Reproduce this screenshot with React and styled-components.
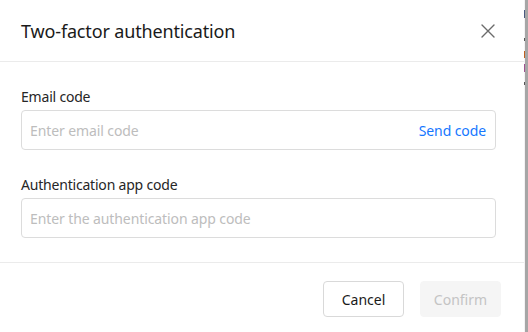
import React from "react";
import styled, { createGlobalStyle } from "styled-components";

const Global = createGlobalStyle`
  html, body { margin: 0; padding: 0; background: #ffffff; }
  body { font-family: "Noto Sans", "Liberation Sans", sans-serif; -webkit-font-smoothing: antialiased; }
  * { box-sizing: border-box; }
`;

const Screen = styled.div`
  display: flex;
  width: 528px;
  height: 332px;
  overflow: hidden;
`;

const Modal = styled.div`
  width: 524px;
  height: 332px;
  background: #ffffff;
  display: flex;
  flex-direction: column;
`;

const Backdrop = styled.div`
  flex: 1;
  display: flex;
`;

const Fragments = styled.div`
  width: 1px;
  display: flex;
  flex-direction: column;
  background: #f4f2f4;
`;

const Frag = styled.div`
  height: ${(p) => p.h}px;
  background: ${(p) => p.c};
`;

const Scrollbar = styled.div`
  flex: 1;
  background: #a6a6a6;
`;

const Header = styled.div`
  height: 62px;
  display: flex;
  align-items: center;
  justify-content: space-between;
  padding: 0 26px 0 21px;
  border-bottom: 1px solid #ebebeb;
`;

const Title = styled.h2`
  margin: 0;
  font-size: 18px;
  font-weight: 400;
  color: #1a1a1a;
  letter-spacing: -0.15px;
`;

const Close = styled.button`
  border: 0;
  background: transparent;
  padding: 0;
  width: 20px;
  height: 20px;
  display: flex;
  align-items: center;
  justify-content: center;
  cursor: pointer;
`;

const Body = styled.div`
  padding: 24px 28px 24px 21px;
  display: flex;
  flex-direction: column;
  gap: 24px;
  border-bottom: 1px solid #ebebeb;
`;

const Field = styled.div`
  display: flex;
  flex-direction: column;
  gap: 2px;
`;

const Label = styled.label`
  font-size: 14px;
  line-height: 22px;
  color: #262626;
  letter-spacing: -0.2px;
`;

const InputBox = styled.div`
  height: 40px;
  border: 1px solid #dcdcdc;
  border-radius: 4px;
  display: flex;
  align-items: center;
  padding: 0 9px 0 8px;
`;

const Input = styled.input`
  flex: 1;
  border: 0;
  outline: none;
  background: transparent;
  font-family: inherit;
  font-size: 14px;
  letter-spacing: -0.1px;
  color: #262626;
  padding: 0;
  &::placeholder { color: #bdbdbd; }
`;

const LinkButton = styled.button`
  border: 0;
  background: transparent;
  padding: 0;
  font-family: inherit;
  font-size: 14px;
  letter-spacing: -0.1px;
  color: #1677ff;
  cursor: pointer;
`;

const Footer = styled.div`
  flex: 1;
  display: flex;
  justify-content: flex-end;
  align-items: flex-start;
  gap: 16px;
  padding: 18px 23px 0 0;
`;

const Button = styled.button`
  width: ${(p) => p.w}px;
  height: 36px;
  border-radius: 4px;
  font-family: inherit;
  font-size: 14px;
  border: 1px solid ${(p) => (p.disabled ? "#f5f5f5" : "#d9d9d9")};
  background: ${(p) => (p.disabled ? "#f5f5f5" : "#ffffff")};
  color: ${(p) => (p.disabled ? "#c4c4c4" : "#1a1a1a")};
  cursor: ${(p) => (p.disabled ? "not-allowed" : "pointer")};
`;

export default function App() {
  return (
    <>
      <Global />
      <Screen>
        <Modal>
          <Header>
            <Title>Two-factor authentication</Title>
            <Close aria-label="Close">
              <svg width="14" height="14" viewBox="0 0 14 14">
                <path d="M1 1 L13 13 M13 1 L1 13" stroke="#6b6b6b" strokeWidth="1.4" strokeLinecap="round" />
              </svg>
            </Close>
          </Header>
          <Body>
            <Field>
              <Label>Email code</Label>
              <InputBox>
                <Input placeholder="Enter email code" />
                <LinkButton>Send code</LinkButton>
              </InputBox>
            </Field>
            <Field>
              <Label>Authentication app code</Label>
              <InputBox>
                <Input placeholder="Enter the authentication app code" />
              </InputBox>
            </Field>
          </Body>
          <Footer>
            <Button w={81}>Cancel</Button>
            <Button w={81} disabled>Confirm</Button>
          </Footer>
        </Modal>
        <Backdrop>
          <Fragments>
            <Frag h={10} c="#f4f2f4" />
            <Frag h={8} c="#4a5a80" />
            <Frag h={20} c="#f4f2f4" />
            <Frag h={3} c="#555" />
            <Frag h={10} c="#f4f2f4" />
            <Frag h={7} c="#c06020" />
            <Frag h={6} c="#f4f2f4" />
            <Frag h={8} c="#a05090" />
            <Frag h={10} c="#f4f2f4" />
            <Frag h={3} c="#555" />
          </Fragments>
          <Scrollbar />
        </Backdrop>
      </Screen>
    </>
  );
}
